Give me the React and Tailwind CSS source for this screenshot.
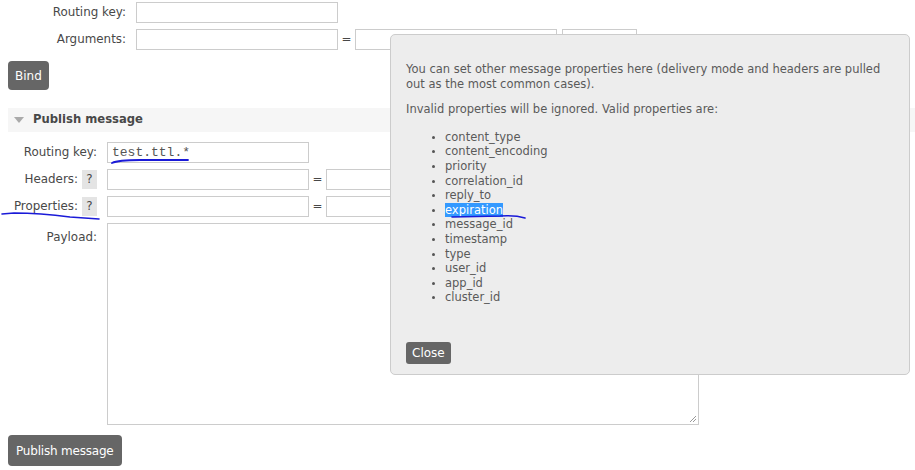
import React from "react";

const Input = ({ className = "" }) => (
  <div className={"h-[21px] border border-[#ccc] bg-white " + className} />
);

const Help = () => (
  <span className="ml-[4px] inline-flex h-[19px] w-[15px] items-center justify-center bg-[#e4e4e4] text-[#484848]">?</span>
);

export default function App() {
  const props = [
    "content_type",
    "content_encoding",
    "priority",
    "correlation_id",
    "reply_to",
    "expiration",
    "message_id",
    "timestamp",
    "type",
    "user_id",
    "app_id",
    "cluster_id",
  ];
  return (
    <div
      className="relative h-[470px] w-[915px] overflow-hidden bg-white text-[11.9px] text-[#484848]"
      style={{ fontFamily: '"DejaVu Sans", Verdana, sans-serif' }}
    >
      {/* Bind form */}
      <div className="flex flex-col gap-[6px] pt-[2px]">
        <div className="flex items-center">
          <div className="w-[126px] text-right">Routing key:</div>
          <Input className="ml-[10px] w-[202px]" />
        </div>
        <div className="flex items-center">
          <div className="w-[126px] text-right">Arguments:</div>
          <Input className="ml-[10px] w-[202px]" />
          <span className="w-[17px] text-center">=</span>
          <Input className="w-[202px]" />
          <Input className="ml-[5px] w-[75px]" />
        </div>
      </div>
      <div className="mt-[11px] pl-[8px]">
        <button className="h-[29px] rounded-[4px] bg-[#666] px-[7px] text-[12px] text-white">Bind</button>
      </div>

      {/* Publish section header */}
      <div className="ml-[8px] mt-[18px] flex h-[24px] items-center bg-[#f6f6f6]">
        <svg width="10" height="6" viewBox="0 0 10 6" className="ml-[6px]">
          <path d="M0 0 L10 0 L5 6 Z" fill="#aaa" />
        </svg>
        <span className="ml-[9px] text-[11.6px] font-bold text-[#484848]">Publish message</span>
      </div>

      {/* Publish form */}
      <div className="mt-[10px] flex flex-col gap-[6px]">
        <div className="flex items-center">
          <div className="w-[97px] text-right">Routing key:</div>
          <div
            className="ml-[10px] flex h-[21px] w-[202px] items-center border border-[#ccc] bg-white pl-[4px] text-[13px] text-[#555]"
            style={{ fontFamily: '"Liberation Mono", "Courier New", monospace' }}
          >
            test.ttl.*
          </div>
        </div>
        <div className="flex items-center">
          <div className="flex w-[97px] items-center justify-end">
            Headers:<Help />
          </div>
          <Input className="ml-[10px] w-[202px]" />
          <span className="w-[17px] text-center">=</span>
          <Input className="w-[202px]" />
        </div>
        <div className="flex items-center">
          <div className="flex w-[97px] items-center justify-end">
            Properties:<Help />
          </div>
          <Input className="ml-[10px] w-[202px]" />
          <span className="w-[17px] text-center">=</span>
          <Input className="w-[202px]" />
        </div>
        <div className="flex items-start">
          <div className="w-[97px] pt-[6px] text-right">Payload:</div>
          <div className="relative ml-[10px] h-[202px] w-[592px] border border-[#ccc] bg-white">
            <svg width="8" height="8" viewBox="0 0 8 8" className="absolute bottom-[1px] right-[1px]">
              <path d="M7 1 L1 7 M7 4 L4 7" stroke="#999" strokeWidth="1" />
            </svg>
          </div>
        </div>
      </div>
      <div className="mt-[10px] pl-[8px]">
        <button className="h-[31px] rounded-[4px] bg-[#666] px-[8px] text-[12px] tracking-[-0.2px] text-white">Publish message</button>
      </div>

      {/* Help popup */}
      <div className="absolute left-[390px] top-[34px] flex h-[341px] w-[520px] flex-col rounded-[5px] border border-[#ccc] bg-[#ededed] px-[15px] pb-[10px] pt-[27px] text-[11.5px] leading-[14.6px] text-[#5a5a5a]">
        <p>
          You can set other message properties here (delivery mode and headers are pulled out as the most common cases).
        </p>
        <p className="mt-[11px]">Invalid properties will be ignored. Valid properties are:</p>
        <ul className="mt-[13px] pl-[39px]">
          {props.map((p) => (
            <li key={p} className="relative">
              <span className="absolute left-[-13px] top-[6px] h-[3px] w-[3px] rounded-full bg-[#555]" />
              {p === "expiration" ? (
                <span className="bg-[#3399ff] text-white">{p}</span>
              ) : (
                p
              )}
            </li>
          ))}
        </ul>
        <div className="mt-auto">
          <button className="h-[22px] rounded-[3px] bg-[#666] px-[6px] text-[12px] text-white">Close</button>
        </div>
      </div>

      {/* pen annotations */}
      <svg className="pointer-events-none absolute left-0 top-0" width="915" height="470">
        <path d="M112 163 Q118 160 140 160 L188 160" stroke="#1a1ad8" strokeWidth="1.8" fill="none" strokeLinecap="round" />
        <path d="M2 214 L14 213 Q40 213 70 217 L99 219" stroke="#1a1ad8" strokeWidth="1.6" fill="none" strokeLinecap="round" />
        <path d="M452 217 L500 216 Q515 215 525 218" stroke="#1a1ad8" strokeWidth="1.6" fill="none" strokeLinecap="round" />
      </svg>
    </div>
  );
}
